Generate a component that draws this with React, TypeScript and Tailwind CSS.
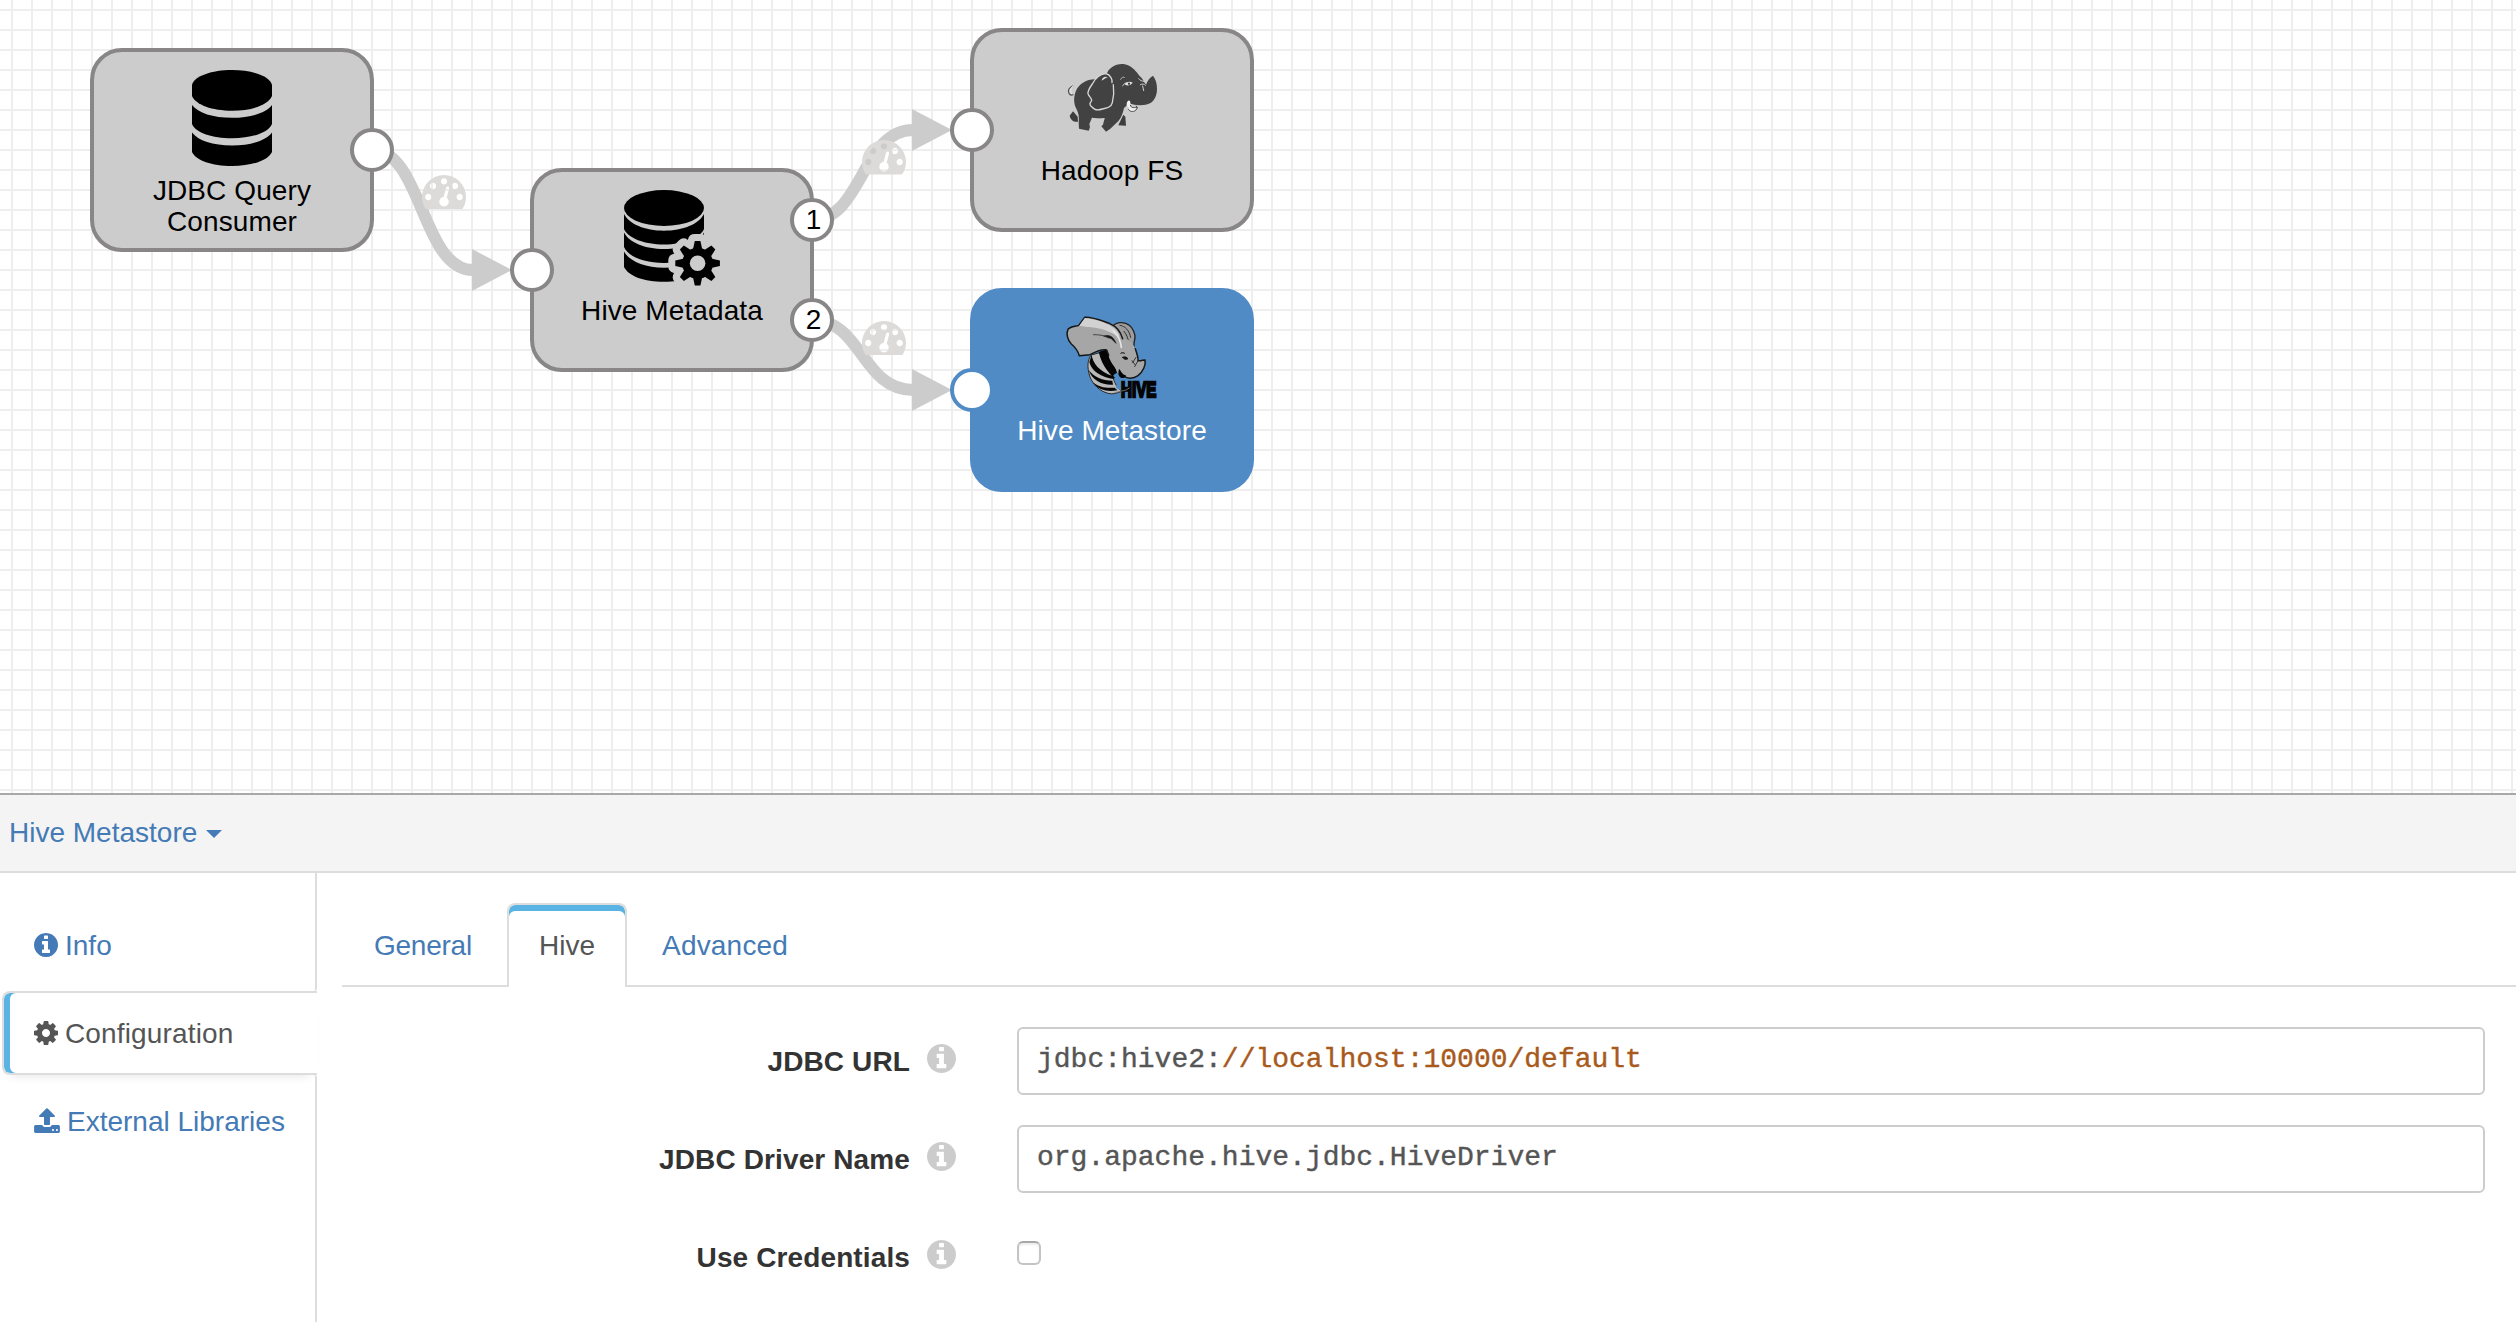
import type { ReactNode } from "react";

function GaugeIcon() {
  return (
    <svg viewBox="0 256 1792 1408" className="block h-[34.6px] w-11" fill="#dddbda">
      <path d="M384 1152q0-53-37.5-90.5t-90.5-37.5-90.5 37.5-37.5 90.5 37.5 90.5 90.5 37.5 90.5-37.5 37.5-90.5zm192-448q0-53-37.5-90.5t-90.5-37.5-90.5 37.5-37.5 90.5 37.5 90.5 90.5 37.5 90.5-37.5 37.5-90.5zm428 481l101-382q6-26-7.5-48.5t-38.5-29.5-48 6.5-30 39.5l-101 382q-60 5-107 43.5t-63 98.5q-20 77 20 146t117 89 146-20 89-117q16-60-6-117t-72-91zm660-33q0-53-37.5-90.5t-90.5-37.5-90.5 37.5-37.5 90.5 37.5 90.5 90.5 37.5 90.5-37.5 37.5-90.5zm-640-640q0-53-37.5-90.5t-90.5-37.5-90.5 37.5-37.5 90.5 37.5 90.5 90.5 37.5 90.5-37.5 37.5-90.5zm448 192q0-53-37.5-90.5t-90.5-37.5-90.5 37.5-37.5 90.5 37.5 90.5 90.5 37.5 90.5-37.5 37.5-90.5zm320 448q0 261-141 483-19 29-54 29h-1402q-35 0-54-29-141-221-141-483 0-182 71-348t191-286 286-191 348-71 348 71 286 191 191 286 71 348z" />
    </svg>
  );
}

function InfoIcon({ className }: { className: string }) {
  return (
    <svg viewBox="128 128 1536 1536" className={className} fill="currentColor">
      <path d="M1152 1376v-160q0-14-9-23t-23-9h-96v-512q0-14-9-23t-23-9h-320q-14 0-23 9t-9 23v160q0 14 9 23t23 9h96v320h-96q-14 0-23 9t-9 23v160q0 14 9 23t23 9h448q14 0 23-9t9-23zm-128-896v-160q0-14-9-23t-23-9h-192q-14 0-23 9t-9 23v160q0 14 9 23t23 9h192q14 0 23-9t9-23zm640 416q0 209-103 385.5t-279.5 279.5-385.5 103-385.5-103-279.5-279.5-103-385.5 103-385.5 279.5-279.5 385.5-103 385.5 103 279.5 279.5 103 385.5z" />
    </svg>
  );
}

function CogIcon({ className }: { className: string }) {
  return (
    <svg viewBox="128 128 1536 1536" className={className} fill="currentColor">
      <path d="M1152 896q0-106-75-181t-181-75-181 75-75 181 75 181 181 75 181-75 75-181zm512-109v222q0 12-8 23t-20 13l-185 28q-19 54-39 91 35 50 107 138 10 12 10 25t-9 23q-27 37-99 108t-94 71q-12 0-26-9l-138-108q-44 23-91 38-16 136-29 186-7 28-36 28h-222q-14 0-24.5-8.5t-11.5-21.5l-28-184q-49-16-90-37l-141 107q-10 9-25 9-14 0-25-11-126-114-165-168-7-10-7-23 0-12 8-23 15-21 51-66.5t54-70.5q-27-50-41-99l-183-27q-13-2-21-12.5t-8-23.5v-222q0-12 8-23t19-13l186-28q14-46 39-92-40-57-107-138-10-12-10-24 0-10 9-23 26-36 98.5-107.5t94.5-71.5q13 0 26 10l138 107q44-23 91-38 16-136 29-186 7-28 36-28h222q14 0 24.5 8.5t11.5 21.5l28 184q49 16 90 37l142-107q9-9 24-9 13 0 25 10 129 119 165 170 7 8 7 22 0 12-8 23-15 21-51 66.5t-54 70.5q26 50 41 98l183 28q13 2 21 12.5t8 23.5z" />
    </svg>
  );
}

function UploadIcon({ className }: { className: string }) {
  return (
    <svg viewBox="64 53 1664 1611" className={className} fill="currentColor">
      <path d="M1344 1472q0-26-19-45t-45-19-45 19-19 45 19 45 45 19 45-19 19-45zm256 0q0-26-19-45t-45-19-45 19-19 45 19 45 45 19 45-19 19-45zm128-224v320q0 40-28 68t-68 28h-1472q-40 0-68-28t-28-68v-320q0-40 28-68t68-28h427q21 56 70.5 92t110.5 36h256q61 0 110.5-36t70.5-92h427q40 0 68 28t28 68zm-325-648q-17 40-59 40h-256v448q0 26-19 45t-45 19h-256q-26 0-45-19t-19-45v-448h-256q-42 0-59-40-17-39 14-69l448-448q18-19 45-19t45 19l448 448q31 30 14 69z" />
    </svg>
  );
}

function DatabaseIcon() {
  return (
    <svg viewBox="-8 0 96 96" className="block h-24 w-24">
      <path d="M0 15C2 6 20 0 40 0S78 6 80 15V26C76 35 60 40.7 40 40.7S4 35 0 26Z" />
      <path d="M0 35C6 43 21 47.8 40 47.8S74 43 80 35V54C76 63 60 68.2 40 68.2S4 63 0 54Z" />
      <path d="M0 62.5C6 70.5 21 75.5 40 75.5S74 70.5 80 62.5V82C76 90.500 60 96 40 96S4 90.500 0 82Z" />
    </svg>
  );
}

const TEETH = [0, 45, 90, 135, 180, 225, 270, 315];

function Gear() {
  return (
    <>
      <circle cx="73.6" cy="73.300" r="15.500" />
      {TEETH.map((a) => (
        <path key={a} d="M68.800 60L70.800 51H76.400L78.400 60Z" transform={`rotate(${a} 73.6 73.3)`} />
      ))}
    </>
  );
}

function DatabaseGearIcon() {
  return (
    <svg viewBox="0 0 96 96" className="block h-24 w-24">
      <mask id="gear-gap" maskUnits="userSpaceOnUse" x="0" y="0" width="96" height="96">
        <rect width="96" height="96" fill="#fff" />
        <g fill="#000" stroke="#000" strokeWidth="14" strokeLinejoin="round">
          <Gear />
        </g>
      </mask>
      <g mask="url(#gear-gap)">
        <ellipse cx="40" cy="18" rx="40" ry="17.9" />
        <path d="M0 24C5 34 21 40.700 40 40.700S75 34 80 24V39C76 48 60 54.500 40 54.500S4 48 0 39Z" />
        <path d="M0 42.500C5 52.500 21 59 40 59S75 52.500 80 42.500V57C76 66.500 60 73 40 73S4 66.500 0 57Z" />
        <path d="M0 61.500C5 71 21 77.800 40 77.800S75 71 80 61.500V77C75 86.500 60 91.700 40 91.700S5 86.500 0 77Z" />
      </g>
      <Gear />
      <circle cx="73.6" cy="73.300" r="7.800" fill="#ccc" />
    </svg>
  );
}

function ElephantIcon() {
  return (
    <svg viewBox="0 0 288 288" className="block h-24 w-24" fill="none" strokeLinecap="round" strokeLinejoin="round">
      <path d="M26 108C16 112 10 121 15 130C18 135 23 136 27 134" stroke="#4c4c4c" strokeWidth="3.500" />
      <path d="M26 109C20 113 18 122 22 130" stroke="#f0f0f0" strokeWidth="3" />
      <path d="M27 184L17 197C19 210 30 217 42 215L41 200Z" fill="#3d3d3d" />
      <path d="M163 226L178 194L184 200L186 227Z" fill="#3d3d3d" />
      <path
        d="M92 88C68 88 45 102 36 122C28 142 29 160 37 176C44 188 46 203 44 217L45 236L74 242L78 232L76 222L84 203L107 206L122 204L117 224L112 229L126 245L139 236L164 212C172 203 177 188 180 174L196 160C212 167 244 168 258 160C273 151 279 134 279 116C279 100 275 87 267 77C258 81 251 92 246 104C240 97 236 84 226 77C212 58 198 44 178 42C160 40 144 49 134 60L128 71C116 70 104 78 97 88Z"
        fill="#424242"
      />
      <path
        d="M144 98C146 88 139 74 126 71C110 72 94 84 85 102C77 113 71 122 72 131C74 140 83 143 83 152C76 161 76 166 84 171C90 179 103 181 115 177C128 174 142 172 145 158C149 142 150 120 148 104"
        stroke="#d6d6d6"
        strokeWidth="4"
      />
      <path d="M113 92C114 82 124 77 133 82C124 82 120 90 113 92Z" fill="#dcdcdc" />
      <path d="M85 205L98 207L120 207" stroke="#cfcfcf" strokeWidth="3" />
      <path d="M170 88C172 82 178 80 181 82M189 98C182 98 178 103 176 108" stroke="#b8b8b8" strokeWidth="3" />
      <path d="M181 103C187 95 198 93 206 98C201 105 190 110 181 103Z" fill="#e6e6e6" />
      <circle cx="195" cy="101" r="3.500" fill="#424242" />
      <path d="M224 86C228 91 233 94 241 94M229 104C234 101 241 101 244 106M236 108L239 122" stroke="#cfcfcf" strokeWidth="3" />
      <path d="M188 161C190 152 194 149 198 153C200 160 200 166 196 174L188 167Z" fill="#f2f2f2" />
      <path d="M199 166C202 175 211 173 216 172C222 170 219 179 212 183C203 187 196 183 193 178" fill="#ededed" stroke="#444" strokeWidth="3" />
      <path d="M217 168L220 173" stroke="#444" strokeWidth="3" />
    </svg>
  );
}

function HiveIcon() {
  return (
    <svg viewBox="0 0 288 288" className="block h-24 w-24 overflow-visible" fill="none" strokeLinecap="round" strokeLinejoin="round">
      <path d="M81 136C70 150 69 172 77 198C86 224 108 244 132 250C146 254 158 250 172 244L160 232C150 214 142 196 148 184L132 122Z" fill="#b9b9b9" stroke="#2a2a2a" strokeWidth="3" />
      <path d="M104 126L132 116L160 190L150 206C138 190 116 174 104 126Z" fill="#050505" />
      <path d="M83 134C86 160 106 184 146 198L150 207C112 202 82 184 76 156Z" fill="#050505" />
      <path d="M74 180C90 202 116 212 145 212L147 224C116 226 84 212 74 180Z" fill="#050505" />
      <path d="M86 216C104 232 126 235 152 233L160 241C132 246 104 242 86 216Z" fill="#050505" />
      <path d="M148 196C150 206 158 200 160 208C150 212 152 220 161 222C152 228 156 236 164 238L172 244V208L158 188Z" fill="#508bc5" />
      <path d="M144 52C154 36 180 33 196 46C206 54 214 70 213 84C211 94 208 102 210 112L180 100Z" fill="#9c9c9c" stroke="#222" strokeWidth="4" />
      <path d="M168 46C184 48 196 62 200 82M180 64C188 74 193 86 194 98" stroke="#333" strokeWidth="3" />
      <path
        d="M62 22C84 20 112 32 136 40C158 50 174 62 182 86C198 88 212 104 219 130C224 144 224 150 222 152C232 154 238 148 243 150C246 164 238 184 222 197C208 206 190 208 180 198C166 202 160 190 156 178C146 162 136 152 134 136L128 120C110 116 90 128 78 134L46 137C42 124 34 112 22 102C10 90 6 70 12 58C20 48 34 50 44 46Z"
        fill="#a6a6a6"
      />
      <path
        d="M78 134L46 137C42 124 34 112 22 102C10 90 6 70 12 58C20 48 34 50 44 46L62 22C84 20 112 32 136 40C158 50 168 62 176 86M214 116C220 134 224 146 222 152C232 154 238 148 243 150C246 164 238 184 222 197C208 206 190 208 180 198M134 136L128 120C110 116 90 128 78 134"
        stroke="#161616"
        strokeWidth="4.500"
      />
      <path d="M62 25C92 26 124 38 144 50C160 60 168 74 166 86C150 68 112 54 82 52C66 50 52 48 46 47Z" fill="#d2d2d2" />
      <path d="M120 78C138 74 148 80 156 100L142 86Z" stroke="#161616" strokeWidth="2" fill="#161616" />
      <path d="M88 74C108 74 122 76 134 84" stroke="#333" strokeWidth="2.500" />
      <path d="M148 62C162 76 170 92 172 112" stroke="#e4e4e4" strokeWidth="5" />
      <path d="M170 130C174 126 178 128 182 130M176 142C182 139 188 141 192 146C186 150 180 149 176 142Z" fill="#161616" stroke="#161616" strokeWidth="2.500" />
      <path d="M216 142L206 158M222 152L212 170M204 152L213 164" stroke="#222" strokeWidth="2.500" />
      <path d="M166 180C170 188 176 196 184 198C178 206 168 202 165 192Z" fill="#050505" stroke="#050505" strokeWidth="4" />
      <text
        x="171"
        y="261"
        textLength="106"
        lengthAdjust="spacingAndGlyphs"
        className="font-['Liberation_Sans'] text-[66px] font-bold"
        fill="#050505"
        stroke="#050505"
        strokeWidth="7"
        strokeLinejoin="miter"
      >
        HIVE
      </text>
      <path d="M152 248L186 240L196 234" stroke="#777" strokeWidth="2.500" />
    </svg>
  );
}

type StageProps = { name: ReactNode; icon: ReactNode; place: string; selected?: boolean };

function Stage({ name, icon, place, selected }: StageProps) {
  const tone = selected ? "border-[#508bc5] bg-[#508bc5] text-white" : "border-[#888686] bg-[#ccc] text-black";
  return (
    <div className={`absolute flex h-[204px] w-[284px] flex-col items-center rounded-[32px] border-4 pt-[18px] ${tone} ${place}`}>
      {icon}
      <div className="mt-[9px] w-[200px] text-center leading-[31px] tracking-[0.1px]">{name}</div>
    </div>
  );
}

function Port({ place, label, selected }: { place: string; label?: string; selected?: boolean }) {
  const tone = selected ? "border-[#508bc5]" : "border-[#888686]";
  return (
    <div className={`absolute flex size-11 items-center justify-center rounded-full border-4 bg-white pl-[3px] leading-none text-black ${tone} ${place}`}>
      {label}
    </div>
  );
}

function Canvas() {
  return (
    <section className="relative h-[793px] shrink-0 overflow-hidden bg-white bg-[linear-gradient(to_right,#eee_2px,transparent_2px),linear-gradient(to_bottom,#eee_2px,transparent_2px)] bg-[size:20px_20px] bg-[position:11px_9px]">
      <svg className="absolute inset-0 h-full w-full" fill="none" stroke="#ccc" strokeWidth="12">
        <path d="M372 150C422 150 422 270 473 270" />
        <path d="M812 220C862 220 862 130 913 130" />
        <path d="M812 320C862 320 862 390 913 390" />
        <g fill="#ccc" stroke="none">
          <path d="M472 249L512 270L472 291Z" />
          <path d="M912 109L952 130L912 151Z" />
          <path d="M912 369L952 390L912 411Z" />
        </g>
      </svg>
      <div className="absolute left-[422px] top-[174.500px]"><GaugeIcon /></div>
      <div className="absolute left-[862px] top-[140px]"><GaugeIcon /></div>
      <div className="absolute left-[862px] top-[320.500px]"><GaugeIcon /></div>

      <Stage place="left-[90px] top-[48px]" icon={<DatabaseIcon />} name={<>JDBC Query<br />Consumer</>} />
      <Stage place="left-[530px] top-[168px]" icon={<DatabaseGearIcon />} name="Hive Metadata" />
      <Stage place="left-[970px] top-[28px]" icon={<ElephantIcon />} name="Hadoop FS" />
      <Stage place="left-[970px] top-[288px]" icon={<HiveIcon />} name="Hive Metastore" selected />

      <Port place="left-[350px] top-[128px]" />
      <Port place="left-[510px] top-[248px]" />
      <Port place="left-[790px] top-[198px]" label="1" />
      <Port place="left-[790px] top-[298px]" label="2" />
      <Port place="left-[950px] top-[108px]" />
      <Port place="left-[950px] top-[368px]" selected />
    </section>
  );
}

function Sidebar() {
  return (
    <nav className="flex w-[317px] shrink-0 flex-col text-[#447ab5]">
      <div className="flex h-[118px] items-start rounded-br-[3px] border-r-2 border-[#ddd] pl-[34px] pt-[53px]">
        <InfoIcon className="mr-[7px] mt-[7px] size-6" />
        Info
      </div>
      <div className="ml-[2px] flex h-[84px] items-start rounded-l-lg border-2 border-r-0 border-[#ddd] bg-white pl-[30px] pt-[21px] tracking-[0.15px] text-[#555] shadow-[inset_6px_0_0_#5ab4e3,0_8px_10px_-8px_rgba(0,0,0,0.12)]">
        <CogIcon className="mr-[7px] mt-[7px] size-6" />
        Configuration
      </div>
      <div className="flex flex-1 items-start rounded-tr-[3px] border-r-2 border-[#ddd] pl-[34px] pt-[27px]">
        <UploadIcon className="mr-[7px] mt-[6px] h-[25px] w-[26px]" />
        External Libraries
      </div>
    </nav>
  );
}

function Tabs() {
  return (
    <div className="flex h-[84px] shrink-0 items-stretch text-[#447ab5]">
      <div className="w-[165px] border-b-2 border-[#ddd] pl-8 pt-[23px] tracking-[-0.25px]">General</div>
      <div className="w-[120px] rounded-t-lg border-2 border-b-0 border-[#ddd] pl-[30px] pt-[21px] text-[#555] shadow-[inset_0_6px_0_#5ab4e3]">
        Hive
      </div>
      <div className="flex-1 border-b-2 border-[#ddd] pl-[35px] pt-[23px] tracking-[0.2px]">Advanced</div>
    </div>
  );
}

function FormRow({ label, children }: { label: string; children: ReactNode }) {
  return (
    <div className="flex h-[98px] items-start">
      <label className="w-[568px] pt-[15px] text-right font-bold tracking-[0.12px] text-[#333]">{label}</label>
      <InfoIcon className="ml-[17px] mr-[61px] mt-[17px] size-[29px] text-[#ccc]" />
      {children}
    </div>
  );
}

function CodeField({ className, children }: { className: string; children: ReactNode }) {
  return (
    <div className={`mr-[31px] h-[68px] flex-1 rounded-md border-2 border-[#ccc] pt-[11px] font-['Liberation_Mono',monospace] text-[#555] [-webkit-text-stroke:0.4px_currentColor] ${className}`}>
      {children}
    </div>
  );
}

export default function App() {
  return (
    <div className="flex h-[1322px] w-[2516px] flex-col overflow-hidden bg-white font-['Liberation_Sans',Arial,sans-serif] text-[28px] leading-[40px]">
      <Canvas />
      <header className="flex h-20 shrink-0 items-start border-b-2 border-t-2 border-b-[#ddd] border-t-[#a8a8a8] bg-[#f4f4f4] pl-[9px] pt-[18px] text-[#447ab5]">
        Hive Metastore
        <span className="ml-[9px] mt-[17px] border-x-8 border-t-8 border-x-transparent border-t-[#447ab5]" />
      </header>
      <div className="flex min-h-0 flex-1">
        <Sidebar />
        <main className="flex flex-1 flex-col pl-[25px] pt-[30px]">
          <Tabs />
          <div className="pt-10">
            <FormRow label="JDBC URL">
              <CodeField className="pl-[18px]">
                jdbc:hive2:<span className="text-[#a85a1c]">//localhost:10000/default</span>
              </CodeField>
            </FormRow>
            <FormRow label="JDBC Driver Name">
              <CodeField className="pl-[18px]">org.apache.hive.jdbc.HiveDriver</CodeField>
            </FormRow>
            <FormRow label="Use Credentials">
              <input
                type="checkbox"
                className="mt-[18px] size-6 appearance-none rounded-md border-2 border-[#c4c4c4] border-t-[#a8a8a8] bg-white shadow-[inset_0_2px_2px_rgba(0,0,0,0.08)]"
              />
            </FormRow>
          </div>
        </main>
      </div>
    </div>
  );
}
